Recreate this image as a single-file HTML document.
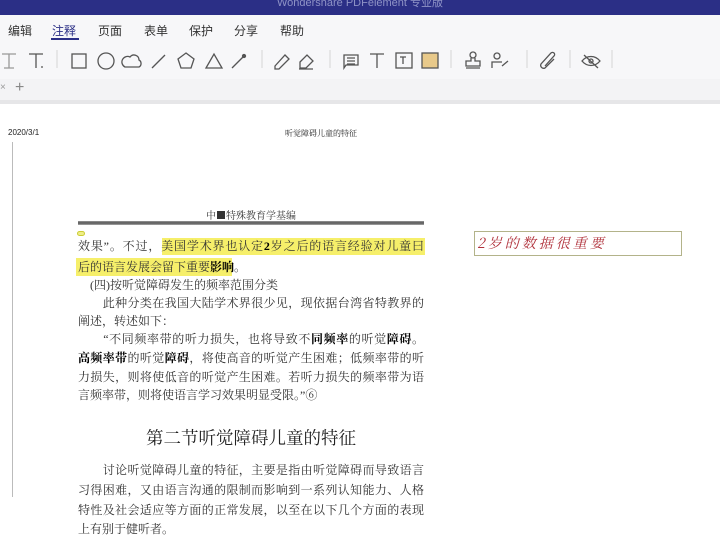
<!DOCTYPE html>
<html><head><meta charset="utf-8"><style>
*{margin:0;padding:0;box-sizing:border-box}
body{width:720px;height:534px;overflow:hidden;background:#fff;position:relative;font-family:"Liberation Sans","Noto Sans CJK SC",sans-serif}
.a{position:absolute}
.title{left:0;top:0;width:720px;height:15px;background:#2b2f86;color:#8f93c6;font-size:11px;text-align:center;line-height:6px}
.menu{left:0;top:15px;width:720px;height:28px;background:#f7f7f9;font-size:12px;color:#333}
.menu span{position:absolute;top:7px}
.tb{left:0;top:43px;width:720px;height:36px;background:#f7f7f9}
.tabs{left:0;top:79px;width:720px;height:22px;background:#f3f3f5}
.sep{left:0;top:100px;width:720px;height:4px;background:#e6e6e8}
svg{position:absolute}
.t{position:absolute;left:78px;width:346px;font-family:"Liberation Serif","Noto Serif CJK SC",serif;font-size:12px;color:#333;line-height:18px;white-space:nowrap;text-align:justify;text-align-last:justify}
.t b{color:#000}
.n{text-align-last:left}
.hl{position:absolute;background:#f6ef6a}
</style></head><body>
<div class="a title">Wondershare PDFelement 专业版</div>
<div class="a menu">
<span style="left:8px">编辑</span><span style="left:52px;color:#2b2f86">注释</span><span style="left:98px">页面</span><span style="left:144px">表单</span><span style="left:189px">保护</span><span style="left:234px">分享</span><span style="left:280px">帮助</span>
<div class="a" style="left:51px;top:23px;width:28px;height:2px;background:#2b2f86"></div>
</div>
<div class="a tb">
<svg width="720" height="36" viewBox="0 43 720 36" fill="none" stroke="#555" stroke-width="1.3">
<path d="M2 54h14M9 54v14M4 68h10" stroke="#999"/>
<path d="M29 54h14M36 54v14M41 67h2"/>
<path d="M57 50v18" stroke="#ddd"/>
<rect x="72" y="54" width="14" height="14"/>
<circle cx="106" cy="61" r="8"/>
<path d="M125 67h14a4 4 0 0 0 0-7a5 5 0 0 0-9-3a4 4 0 0 0-5 10z"/>
<path d="M152 68l13-13"/>
<path d="M186 53l8 6l-3 9h-10l-3-9z"/>
<path d="M206 68l8-14l8 14z"/>
<path d="M232 68l12-12"/><circle cx="244" cy="56" r="1.5" fill="#555"/>
<path d="M262 50v18" stroke="#ddd"/>
<path d="M275 66l10-11l4 4l-10 10h-4z"/>
<path d="M300 62l7-7l6 6l-7 7h-6zM299 69h14"/>
<path d="M330 50v18" stroke="#ddd"/>
<path d="M344 55h14v10h-12l-2 3zM347 58h8M347 61h8M347 64h8"/>
<path d="M370 54h14M377 54v14"/>
<rect x="396" y="53" width="16" height="15"/><path d="M400 57h6M403 57v7"/>
<rect x="422" y="53" width="16" height="15" fill="#e8c98a"/>
<path d="M451 50v18" stroke="#ddd"/>
<circle cx="473" cy="55" r="3"/><path d="M471 58v3h-5v5h14v-5h-5v-3M466 68h14"/>
<circle cx="497" cy="56" r="3"/><path d="M492 68v-6h10M502 66l6-5"/>
<path d="M527 50v18" stroke="#ddd"/>
<path d="M545 66l9-10a2 2 0 0 0-3-3l-10 11a3 3 0 0 0 4 4l9-9"/>
<path d="M570 50v18" stroke="#ddd"/>
<path d="M582 61c5-6 13-6 18 0c-5 6-13 6-18 0zM584 55l14 13"/><circle cx="591" cy="61" r="2"/>
<path d="M612 50v18" stroke="#ddd"/>
</svg>
</div>
<div class="a tabs"><span class="a" style="left:0;top:3px;font-size:10px;color:#999">×</span><span class="a" style="left:15px;top:0;font-size:16px;color:#888">+</span></div>
<div class="a sep"></div>

<div class="a" style="left:8px;top:128px;font-size:8px;color:#222">2020/3/1</div>
<div class="a" style="left:285px;top:128px;font-size:8px;color:#222;font-family:'Noto Serif CJK SC',serif">听觉障碍儿童的特征</div>
<div class="a" style="left:12px;top:142px;width:1px;height:355px;background:#bbb"></div>

<div class="a" style="left:78px;top:207px;width:346px;text-align:center;font-size:10px;color:#333;font-family:'Noto Serif CJK SC',serif">中■特殊教育学基编</div>
<div class="a" style="left:78px;top:221px;width:346px;height:4px;background:linear-gradient(#999,#555,#aaa)"></div>
<div class="a" style="left:77px;top:231px;width:8px;height:5px;border:1px solid #cc3;border-radius:3px;background:#ee8"></div>

<div class="hl" style="left:162px;top:238px;width:263px;height:17px"></div>
<div class="hl" style="left:76px;top:258px;width:156px;height:18px"></div>

<div class="t" style="top:237px">效果”。不过，美国学术界也认定<b>2</b>岁之后的语言经验对儿童曰</div>
<div class="t n" style="top:258px">后的语言发展会留下重要<b>影响</b>。</div>
<div class="t n" style="top:276px">　(四)按听觉障碍发生的频率范围分类</div>
<div class="t" style="top:294px">　　此种分类在我国大陆学术界很少见，现依据台湾省特教界的</div>
<div class="t n" style="top:312px">阐述，转述如下：</div>
<div class="t" style="top:330px">　　“不同频率带的听力损失，也将导致不<b>同频率</b>的听觉<b>障碍</b>。</div>
<div class="t" style="top:349px"><b>高频率带</b>的听觉<b>障碍</b>，将使高音的听觉产生困难；低频率带的听</div>
<div class="t" style="top:368px">力损失，则将使低音的听觉产生困难。若听力损失的频率带为语</div>
<div class="t n" style="top:386px">言频率带，则将使语言学习效果明显受限。”⑥</div>
<div class="a" style="left:78px;top:425px;width:346px;text-align:center;font-family:'Liberation Serif','Noto Serif CJK SC',serif;font-size:17.5px;color:#222">第二节听觉障碍儿童的特征</div>
<div class="t" style="top:461px">　　讨论听觉障碍儿童的特征，主要是指由听觉障碍而导致语言</div>
<div class="t" style="top:481px">习得困难，又由语言沟通的限制而影响到一系列认知能力、人格</div>
<div class="t" style="top:501px">特性及社会适应等方面的正常发展，以至在以下几个方面的表现</div>
<div class="t n" style="top:520px">上有别于健听者。</div>

<div class="a" style="left:474px;top:231px;width:208px;height:25px;border:1.5px solid #b3b38a"></div>
<div class="a" style="left:477px;top:233px;font-size:14px;color:#b0303a;font-family:'Noto Serif CJK SC',serif;letter-spacing:3px;font-style:italic">2岁的数据很重要</div>
</body></html>
